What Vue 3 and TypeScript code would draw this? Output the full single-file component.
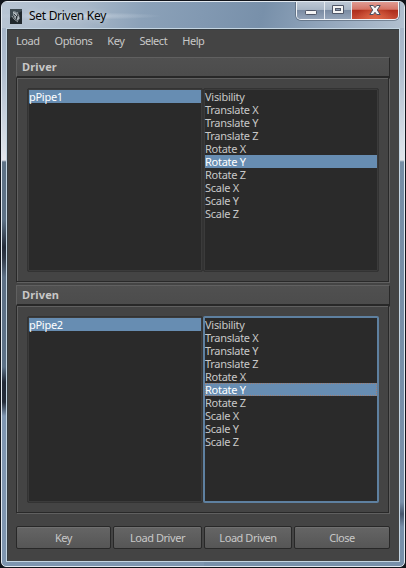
<script setup lang="ts">
import { ref } from 'vue'

interface Section {
  title: string
  object: string
  selected: string
  focused: boolean
}

const menus = ['Load', 'Options', 'Key', 'Select', 'Help']
const attributes = [
  'Visibility', 'Translate X', 'Translate Y', 'Translate Z',
  'Rotate X', 'Rotate Y', 'Rotate Z', 'Scale X', 'Scale Y', 'Scale Z',
]
const sections = ref<Section[]>([
  { title: 'Driver', object: 'pPipe1', selected: 'Rotate Y', focused: false },
  { title: 'Driven', object: 'pPipe2', selected: 'Rotate Y', focused: true },
])
const actions = ['Key', 'Load Driver', 'Load Driven', 'Close']

function choose(section: Section, name: string) {
  section.selected = name
  sections.value.forEach((s) => { s.focused = s === section })
}
</script>

<template>
  <div class="desktop">
    <div class="window">
      <header class="titlebar">
        <svg class="app-icon" width="12" height="15" viewBox="0 0 12 15">
          <rect width="12" height="15" fill="#20282d" />
          <path d="M0 0H12V2L0 9Z" fill="#3e4a51" />
          <path d="M3 2.5C5 1.5 7 3 7 5L10 9L8 12L5 10L3 6Z" fill="#89949a" />
          <path d="M3 3L6 6L5 9M7 3L9 7L7 11M2 7L4 10L8 13M5 4L9 10" fill="none" stroke="#c5ccd0" stroke-width=".7" />
          <path d="M4 5L7 8L6 11M8 6L6 9" fill="none" stroke="#182026" stroke-width=".8" />
        </svg>
        <h1>Set Driven Key</h1>
        <div class="controls">
          <button class="min" aria-label="Minimize">
            <svg width="12" height="5" viewBox="0 0 12 5"><rect x=".5" y=".5" width="11" height="4" rx=".7" fill="#f4f4f4" stroke="#505768" /></svg>
          </button>
          <button class="max" aria-label="Maximize">
            <svg width="12" height="9" viewBox="0 0 12 9"><path d="M.5.5H11.5V8.5H.5Z" fill="#f4f4f4" stroke="#505768" /><rect x="3.5" y="3.5" width="5" height="2" fill="#8796ad" stroke="#505768" /></svg>
          </button>
          <button class="close" aria-label="Close window">
            <svg width="12" height="10" viewBox="0 0 12 10"><path d="M.8.5H4.3L6 2.7L7.7.5H11.2L8.3 5L11.2 9.5H7.7L6 7.3L4.3 9.5H.8L3.7 5Z" fill="#f6f6f6" stroke="#4d5160" /></svg>
          </button>
        </div>
      </header>
      <div class="frame">
        <main class="client">
          <nav class="menubar"><span v-for="menu in menus" :key="menu" :class="menu.toLowerCase()">{{ menu }}</span></nav>
          <section v-for="section in sections" :key="section.title" class="section" :class="section.title.toLowerCase()">
            <h2>{{ section.title }}</h2>
            <div class="group">
              <div class="list"><div class="rows"><div class="row selected">{{ section.object }}</div></div></div>
              <div class="list" :class="{ focused: section.focused }">
                <div class="rows">
                  <div
                    v-for="name in attributes" :key="name" class="row"
                    :class="{ selected: name === section.selected }" @click="choose(section, name)"
                  >{{ name }}</div>
                </div>
              </div>
            </div>
          </section>
          <footer class="actions"><button v-for="action in actions" :key="action">{{ action }}</button></footer>
        </main>
      </div>
    </div>
  </div>
</template>

<style>
body { background: #101319; overflow: hidden; }
</style>

<style scoped>
* { box-sizing: border-box; }
.desktop { width: 406px; height: 568px; padding: 1px; background: #11141b; font-family: "Noto Sans", sans-serif; }
.window {
  width: 404px; height: 566px; border: 1px solid #e2e9f0; border-radius: 6px 6px 5px 5px; overflow: hidden;
  background:
    linear-gradient(#a0b0c4 0, #aebccd 65px, #d9e0e8 145px, #e4e6ed 158px, #5d7185 160px, #5d7185 218px, #242c39 245px, #303947 256px, #5d7085 275px, #5c7187 365px, #222a38 380px, #242c39 400px, #7f96b1 414px, #7e95af 100%) left / 202px 100% no-repeat,
    linear-gradient(#a0b0c4 0, #aebccd 65px, #d9e0e8 145px, #dfe3e8 158px, #768da5 160px, #7890aa 500px, #45566d 512px, #7890aa 525px, #7890aa 100%) right / 202px 100% no-repeat;
}
.titlebar {
  height: 26px; display: flex; align-items: flex-start; padding-left: 8px;
  background:
    radial-gradient(ellipse at 70px 14px, #d3dde7aa 0, #c5d1de77 40px, transparent 90px),
    linear-gradient(105deg, #b8c5d4 0, #a8b8c9 80px, #8ba1b8 140px, #8299b2 195px, #7890aa 255px, #91a5bb 315px, #b2c0d0 100%);
}
.app-icon { margin-top: 7px; flex: none; }
h1 { margin: 4px 0 0 7px; font-size: 12px; line-height: 20px; font-weight: 400; letter-spacing: -.29px; color: #050505; white-space: nowrap; text-shadow: 0 0 7px #ffffff99; }
.controls {
  margin-left: auto; margin-right: 5px; width: 103px; height: 18px; display: flex;
  border: 1px solid #f0f3f7; border-top: 0; border-radius: 0 0 5px 5px; overflow: hidden; box-shadow: 0 0 0 1px #4a566788;
}
.controls button { border: 0; padding: 3px 0 0; display: flex; align-items: flex-start; justify-content: center; }
.controls .min, .controls .max { width: 28px; border-right: 1px solid #e5eaf0; background: linear-gradient(#bdc8d5 0, #a9b6c6 44%, #7a8ba2 48%, #94a4b9 100%); }
.controls .max { width: 27px; }
.controls .min { padding-top: 8px; }
.controls .close { flex: 1; background: radial-gradient(ellipse at 50% 100%, #e06b4a 0, transparent 60%), linear-gradient(#df9b92 0, #d47568 43%, #ae2d1b 48%, #c64b35 100%); }
.frame { padding: 0 4px; height: 534px; }
.client { height: 534px; border: 1px solid #c4d5e2; background: #444; padding: 0 9px; box-shadow: inset 1px 1px #373e43; }
.menubar { height: 28px; display: flex; align-items: center; padding-bottom: 4px; font-size: 11px; line-height: 18px; letter-spacing: -.45px; color: #c8c8c8; }
.menubar .options { margin-left: 15px; }
.menubar .key { margin-left: 15px; }
.menubar .select { margin-left: 15px; }
.menubar .help { margin-left: 15px; }
.section { width: 374px; color: #c8c8c8; }
.driver { height: 228px; }
.driven { height: 229px; }
h2 {
  margin: 0; height: 21px; padding-left: 5px; font-size: 11px; line-height: 18px; font-weight: 700; letter-spacing: .15px;
  border: 1px solid #606060; border-right-color: #282828; border-bottom: 2px solid #282828; background: linear-gradient(#505050, #4c4c4c);
}
.group {
  display: flex; width: 373px; height: 204px; padding: 10px 9px 9px 10px;
  border: 1px solid #292929; border-top: 0; box-shadow: inset 1px 1px #606060, 1px 1px #606060;
}
.driven .group { height: 207px; }
.list { height: 184px; width: 176px; border: 1px solid #333; border-radius: 2px; background: #2a2a2a; padding: 1px; box-shadow: inset 0 0 0 1px #3b3b3b; }
.driven .list { height: 187px; }
.driven .focused { border: 2px solid #5e80a0; padding: 0; box-shadow: none; }
.row { height: 13px; font-size: 11px; line-height: 13px; letter-spacing: -.28px; color: #c8c8c8; white-space: nowrap; }
.selected { color: #fff; background: #678db2; }
.focused .selected { outline: 1px dotted #a07e70; outline-offset: -1px; }
.actions { display: grid; grid-template-columns: 95px 89px 88px 96px; gap: 2px; padding-top: 12px; }
.actions button {
  height: 23px; padding: 0; border: 1px solid #282828; border-radius: 2px; color: #c8c8c8;
  background: linear-gradient(#656565, #565656); box-shadow: inset 0 1px #707070; font: 11px/20px "Noto Sans", sans-serif; letter-spacing: -.45px;
}
</style>
